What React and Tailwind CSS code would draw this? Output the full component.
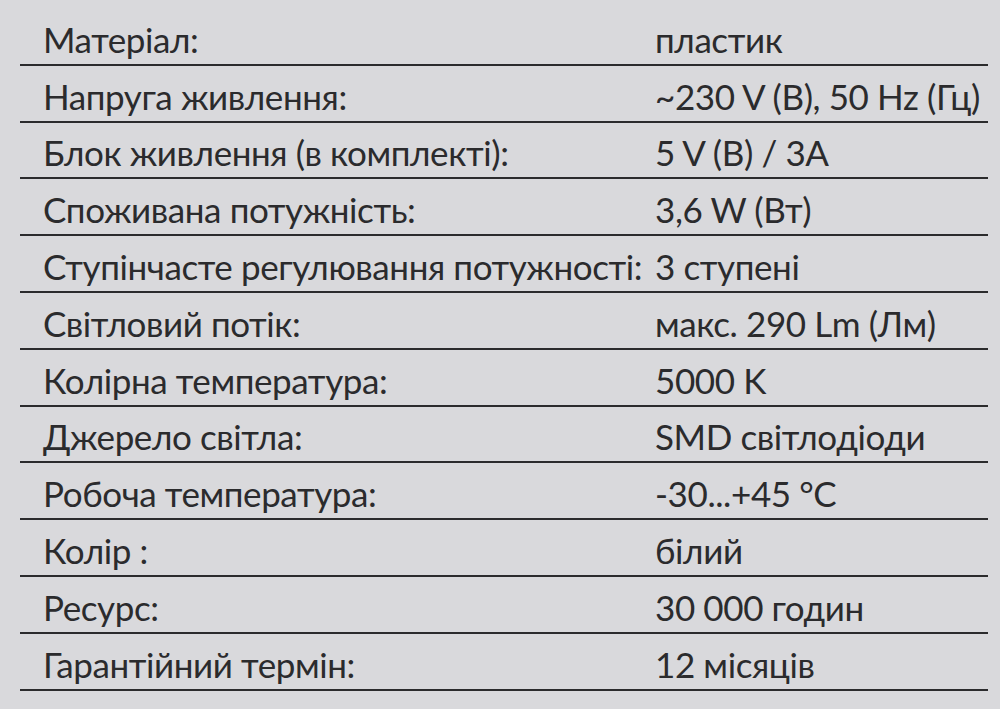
const rows = [
  ['Матеріал:', 'пластик'],
  ['Напруга живлення:', '~230 V (В), 50 Hz (Гц)'],
  ['Блок живлення (в комплекті):', '5 V (В) / 3A'],
  ['Споживана потужність:', '3,6 W (Вт)'],
  ['Ступінчасте регулювання потужності:', '3 ступені'],
  ['Світловий потік:', 'макс. 290 Lm (Лм)'],
  ['Колірна температура:', '5000 K'],
  ['Джерело світла:', 'SMD світлодіоди'],
  ['Робоча температура:', '-30...+45 °C'],
  ['Колір :', 'білий'],
  ['Ресурс:', '30 000 годин'],
  ['Гарантійний термін:', '12 місяців'],
];

export default function App() {
  return (
    <div className="w-[1000px] h-[709px] overflow-hidden bg-[#d9d9dc] pt-[9px] text-[#2b2b2d]" style={{ fontFamily: 'Lato, "Open Sans", sans-serif' }}>
      <div className="ml-[20px] w-[968px]">
        {rows.map(([label, value]) => (
          <div key={label} className="grid grid-cols-[635px_1fr] h-[56.8px] border-b-2 border-[#2b2b2d] items-end pb-[4px] text-[35px] leading-[42px] tracking-[-0.4px]">
            <div className="pl-[23px] whitespace-nowrap">{label}</div>
            <div className="whitespace-nowrap">{value}</div>
          </div>
        ))}
      </div>
    </div>
  );
}
